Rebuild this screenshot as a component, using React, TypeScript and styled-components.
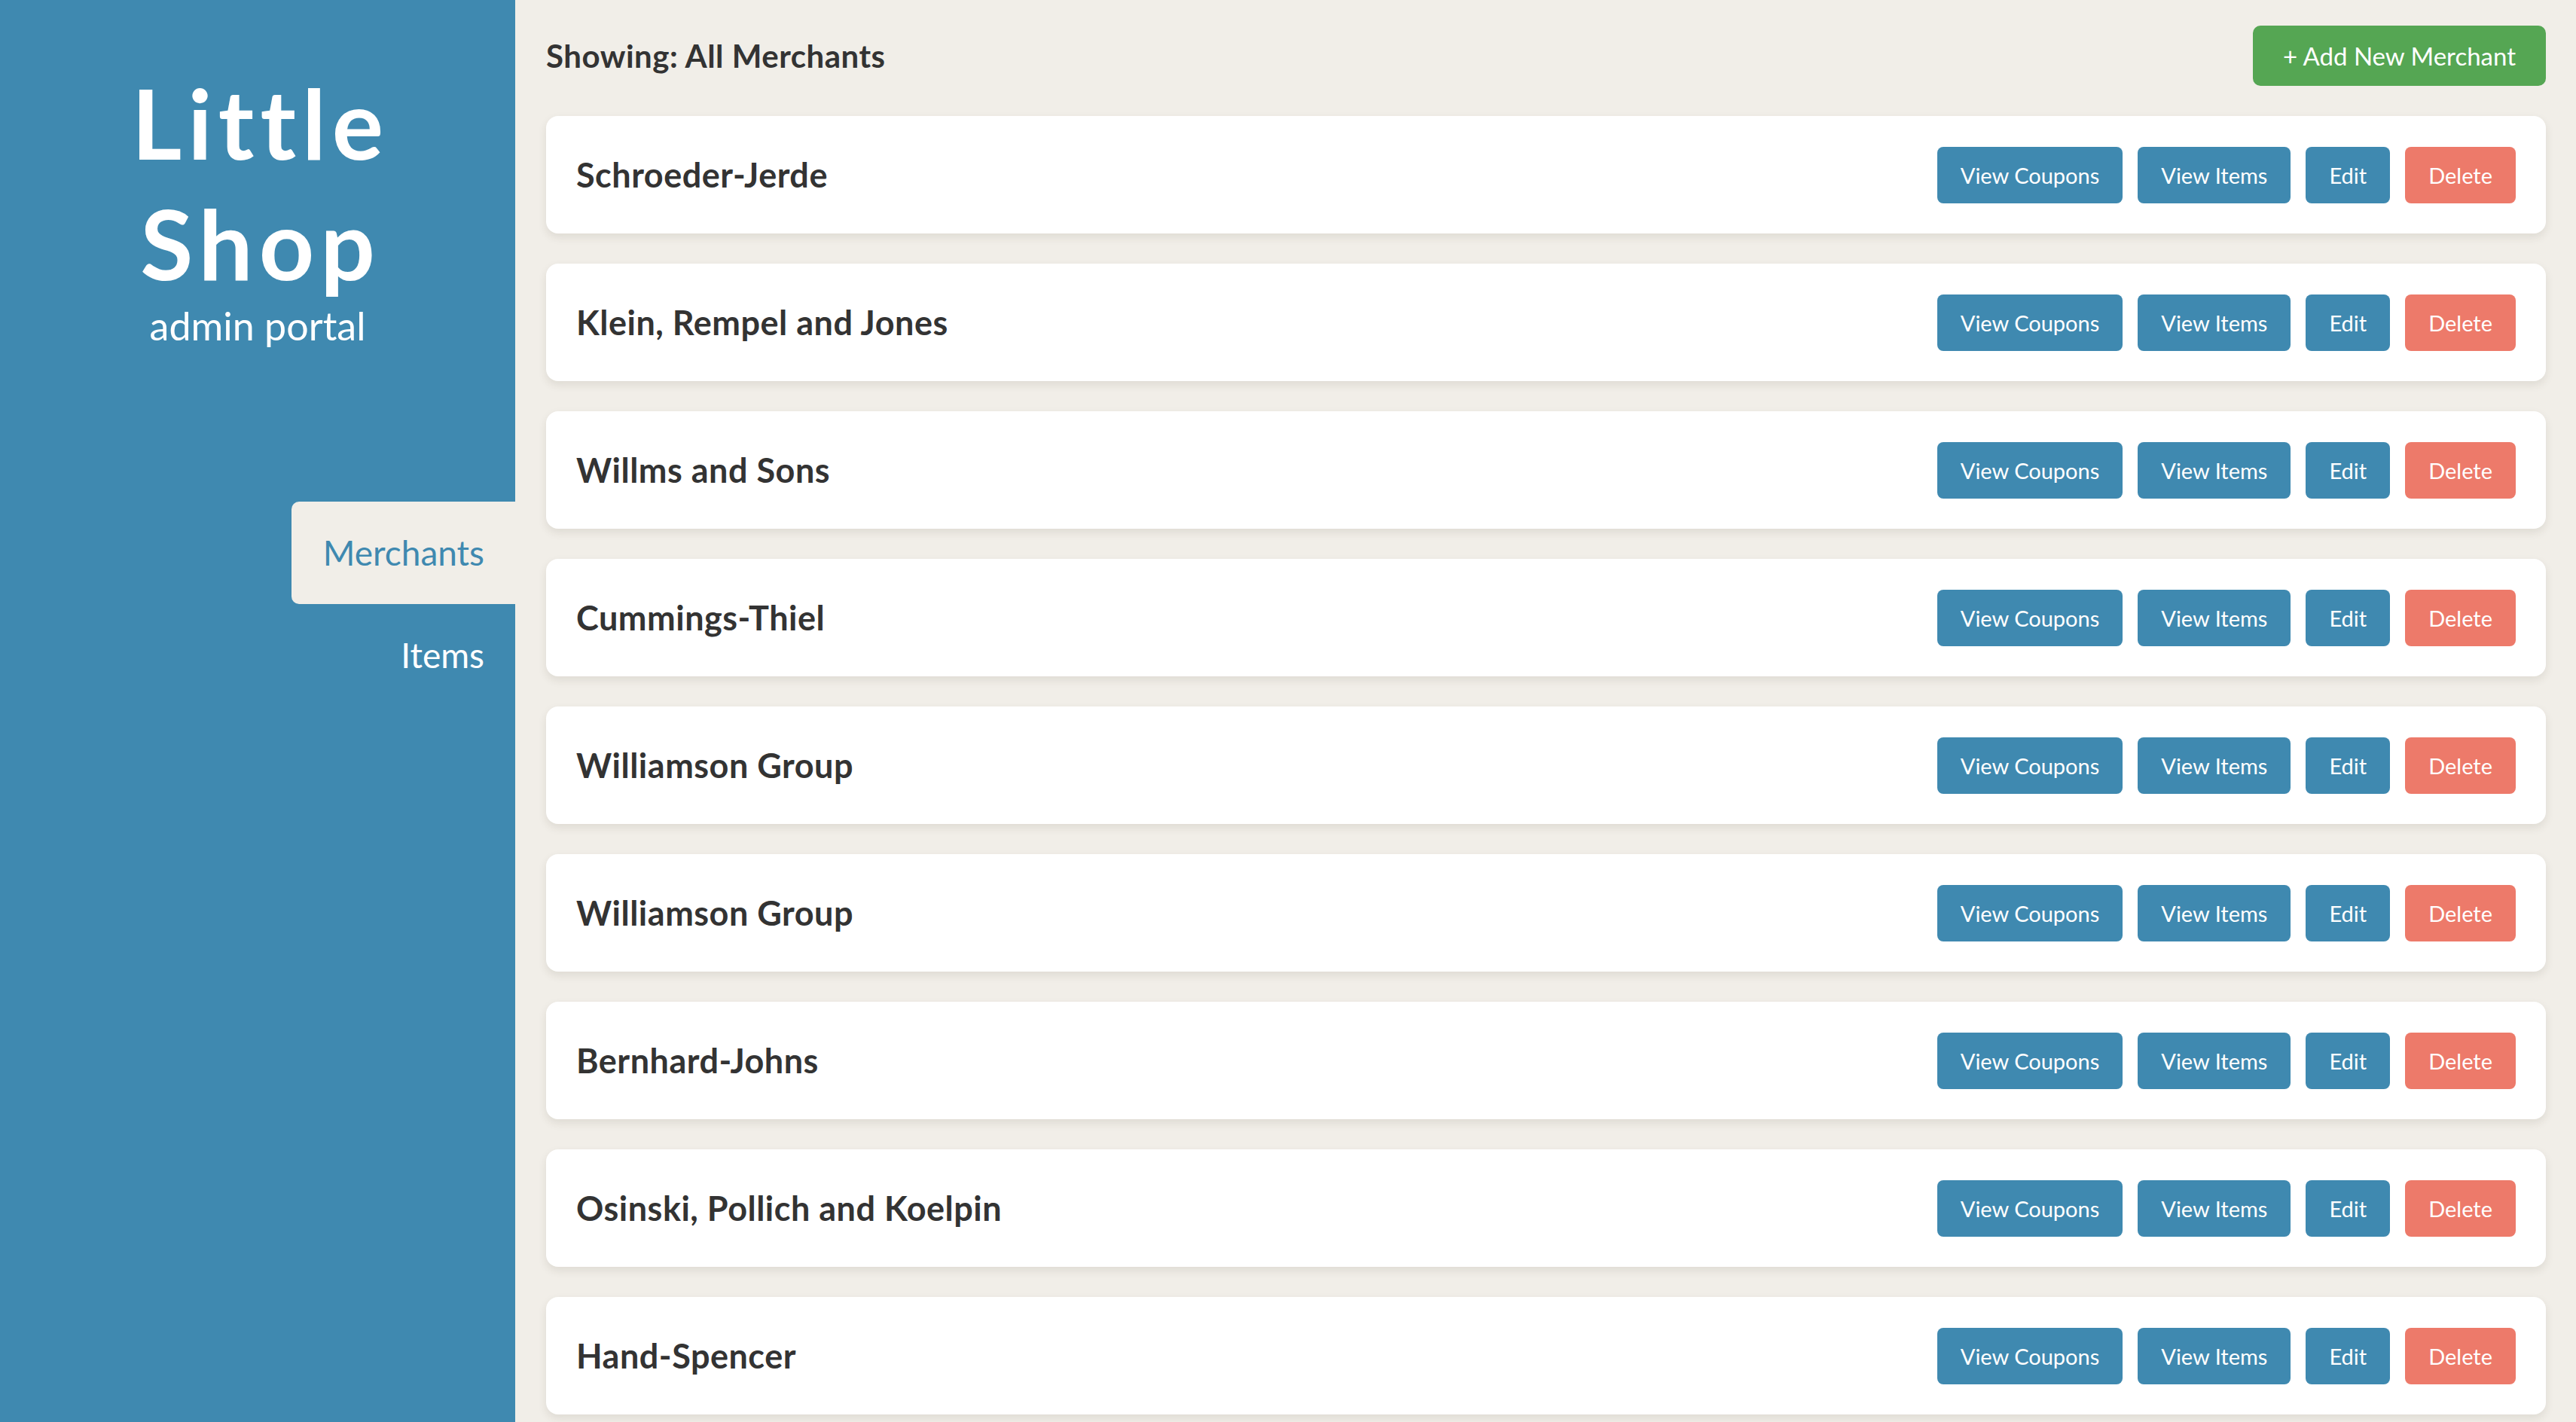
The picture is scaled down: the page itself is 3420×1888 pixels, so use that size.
import React from "react";
import styled, { createGlobalStyle } from "styled-components";

const GlobalStyle = createGlobalStyle`
  html, body {
    margin: 0;
    padding: 0;
    background: #f1eee8;
    font-family: Lato, "Open Sans", sans-serif;
  }
  * { box-sizing: border-box; }
`;

const Layout = styled.div`
  display: grid;
  grid-template-columns: 684px 1fr;
  min-height: 100vh;
`;

const Sidebar = styled.aside`
  background: #3f89b0;
  display: flex;
  flex-direction: column;
  color: #ffffff;
`;

const Brand = styled.div`
  text-align: center;
  padding-top: 83px;
`;

const BrandTitle = styled.h1`
  margin: 0;
  padding-left: 8px;
  font-size: 128px;
  line-height: 160px;
  font-weight: 700;
  letter-spacing: 8px;
`;

const BrandSub = styled.div`
  margin-top: 0;
  font-size: 52px;
  line-height: 1.15;
  font-weight: 400;
`;

const Nav = styled.nav`
  margin-top: 203px;
  display: flex;
  flex-direction: column;
  align-items: flex-end;
`;

const NavItem = styled.a<{ $active?: boolean }>`
  width: 297px;
  height: 136px;
  display: flex;
  align-items: center;
  justify-content: flex-end;
  padding-right: 41px;
  font-size: 46px;
  border-radius: 10px 0 0 10px;
  text-decoration: none;
  cursor: pointer;
  background: ${(p) => (p.$active ? "#f1eee8" : "transparent")};
  color: ${(p) => (p.$active ? "#3f89b0" : "#ffffff")};
`;

const Main = styled.main`
  padding: 34px 40px 10px 41px;
  display: flex;
  flex-direction: column;
`;

const Header = styled.header`
  display: flex;
  align-items: center;
  justify-content: space-between;
  height: 80px;
`;

const Heading = styled.h2`
  margin: 0;
  font-size: 42px;
  letter-spacing: 0.5px;
  font-weight: 700;
  color: #333333;
`;

const Button = styled.button<{ $variant?: "primary" | "danger" | "success" }>`
  border: none;
  border-radius: 8px;
  font-family: inherit;
  color: #ffffff;
  cursor: pointer;
  background: ${(p) =>
    p.$variant === "danger" ? "#ed7a6a" : p.$variant === "success" ? "#55a653" : "#3f89b0"};
`;

const AddButton = styled(Button)`
  height: 80px;
  padding: 0 40px;
  font-size: 33px;
  border-radius: 10px;
`;

const CardList = styled.ul`
  list-style: none;
  margin: 40px 0 0;
  padding: 0;
  display: flex;
  flex-direction: column;
  gap: 40px;
`;

const Card = styled.li`
  height: 156px;
  background: #ffffff;
  border-radius: 16px;
  box-shadow: 0 5px 12px rgba(60, 50, 30, 0.1);
  display: flex;
  align-items: center;
  justify-content: space-between;
  padding: 0 40px;
`;

const MerchantName = styled.span`
  font-size: 45px;
  letter-spacing: 0.5px;
  font-weight: 700;
  color: #333333;
`;

const Actions = styled.div`
  display: flex;
  gap: 20px;
`;

const ActionButton = styled(Button)`
  height: 75px;
  padding: 0 31px;
  font-size: 29px;
`;

const merchants = [
  "Schroeder-Jerde",
  "Klein, Rempel and Jones",
  "Willms and Sons",
  "Cummings-Thiel",
  "Williamson Group",
  "Williamson Group",
  "Bernhard-Johns",
  "Osinski, Pollich and Koelpin",
  "Hand-Spencer",
];

export default function App() {
  return (
    <>
      <GlobalStyle />
      <Layout>
        <Sidebar>
          <Brand>
            <BrandTitle>
              Little
              <br />
              Shop
            </BrandTitle>
            <BrandSub>admin portal</BrandSub>
          </Brand>
          <Nav>
            <NavItem $active>Merchants</NavItem>
            <NavItem>Items</NavItem>
          </Nav>
        </Sidebar>
        <Main>
          <Header>
            <Heading>Showing: All Merchants</Heading>
            <AddButton $variant="success">+ Add New Merchant</AddButton>
          </Header>
          <CardList>
            {merchants.map((name, i) => (
              <Card key={i}>
                <MerchantName>{name}</MerchantName>
                <Actions>
                  <ActionButton>View Coupons</ActionButton>
                  <ActionButton>View Items</ActionButton>
                  <ActionButton>Edit</ActionButton>
                  <ActionButton $variant="danger">Delete</ActionButton>
                </Actions>
              </Card>
            ))}
          </CardList>
        </Main>
      </Layout>
    </>
  );
}
